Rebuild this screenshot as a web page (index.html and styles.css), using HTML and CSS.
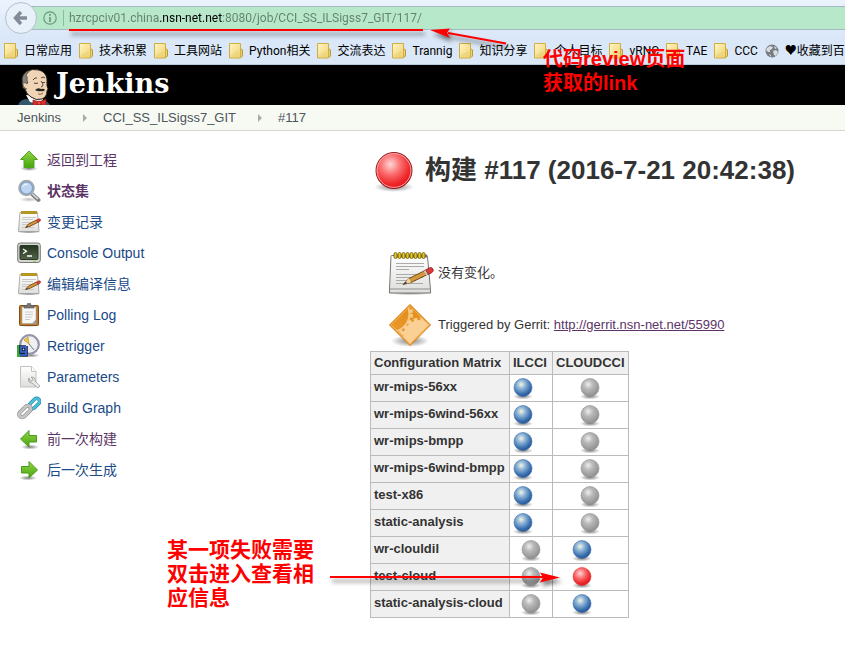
FILE: index.html
```html
<!DOCTYPE html>
<html lang="zh-CN">
<head>
<meta charset="utf-8">
<title>CCI_SS_ILSigss7_GIT #117 [Jenkins]</title>
<link rel="stylesheet" href="styles.css">
</head>
<body>
<svg class="defs" aria-hidden="true">
  <defs>
    <linearGradient id="folderFill" x2="1" y2="1"><stop stop-color="#fff6c8"/><stop offset="1" stop-color="#efd168"/></linearGradient>
    <linearGradient id="greenFill" x2="0" y2="1"><stop stop-color="#93d348"/><stop offset="1" stop-color="#48a70d"/></linearGradient>
    <linearGradient id="paperFill" x2="0" y2="1"><stop stop-color="#fff"/><stop offset="1" stop-color="#dededb"/></linearGradient>
    <linearGradient id="orangeFill" x2="0" y2="1"><stop stop-color="#e18c16"/><stop offset="1" stop-color="#eda038"/></linearGradient>
    <linearGradient id="screenFill" x2="0" y2="1"><stop stop-color="#23351f"/><stop offset="1" stop-color="#526348"/></linearGradient>
    <radialGradient id="blueFill" cx=".4" cy=".33" r=".65"><stop stop-color="#f4f6df"/><stop offset=".35" stop-color="#91b6d8"/><stop offset=".8" stop-color="#3b71b0"/><stop offset="1" stop-color="#2b599a"/></radialGradient>
    <radialGradient id="greyFill" cx=".4" cy=".33" r=".65"><stop stop-color="#eee"/><stop offset=".4" stop-color="#b9b9b9"/><stop offset="1" stop-color="#929292"/></radialGradient>
    <radialGradient id="redFill" cx=".4" cy=".33" r=".65"><stop stop-color="#ffd6d6"/><stop offset=".45" stop-color="#fa6a6c"/><stop offset=".85" stop-color="#ee2529"/><stop offset="1" stop-color="#e51b20"/></radialGradient>
    <radialGradient id="shadowFill"><stop stop-color="#000" stop-opacity=".5"/><stop offset="1" stop-color="#000" stop-opacity="0"/></radialGradient>
    <clipPath id="diamond"><path d="M24 4.500L43.500 24 24 43.500 4.500 24z"/></clipPath>
    <symbol id="folder" viewBox="0 0 14 16"><path d="M11 6h1.500l1 1v6l-1.500 1.500h-2z" fill="#ecd27a" stroke="#bd9a35"/><path d="M.5.5h11v14.500H.5z" fill="url(#folderFill)" stroke="#cfae45"/><path d="M1.500 12l8-4v6h-8z" fill="#ead07a" opacity=".6"/></symbol>
    <symbol id="ball-blue" viewBox="0 0 24 24"><ellipse cx="12" cy="20.500" rx="10" ry="3" fill="url(#shadowFill)"/><circle cx="12" cy="11.500" r="9" fill="url(#blueFill)" stroke="#386aa6" stroke-width=".6"/></symbol>
    <symbol id="ball-grey" viewBox="0 0 24 24"><ellipse cx="12" cy="20.500" rx="10" ry="3" fill="url(#shadowFill)"/><circle cx="12" cy="11.500" r="9" fill="url(#greyFill)" stroke="#8b8b8b" stroke-width=".6"/></symbol>
    <symbol id="ball-red" viewBox="0 0 24 24"><ellipse cx="12" cy="20.500" rx="10" ry="3" fill="url(#shadowFill)"/><circle cx="12" cy="11.500" r="9" fill="url(#redFill)" stroke="#d3383b" stroke-width=".6"/></symbol>
    <symbol id="notepad" viewBox="0 0 48 48">
      <ellipse cx="24" cy="43.500" rx="23" ry="3" fill="url(#shadowFill)"/>
      <path d="M5.500 6.500h35q1 0 1 1l3 33v3.500h-41v-4l1.500-32.500q0-1 .5-1z" fill="url(#paperFill)" stroke="#777"/>
      <path d="M4 40h40" stroke="#aaa" stroke-width="1.500"/>
      <path d="M10 14.500h28M10 17.500h28M10 20.500h13M10 25.500h29M10 28.500h27M10 31.500h20M10 34.500h27" stroke="#aaa"/>
      <path d="M8 7h33" stroke="#777" stroke-width="3"/>
      <g fill="#e0c52a" stroke="#6f5c00" stroke-width=".8"><rect x="8" y="3.500" width="3" height="6" rx="1.500"/><rect x="12" y="3.500" width="3" height="6" rx="1.500"/><rect x="16" y="3.500" width="3" height="6" rx="1.500"/><rect x="20" y="3.500" width="3" height="6" rx="1.500"/><rect x="24" y="3.500" width="3" height="6" rx="1.500"/><rect x="28" y="3.500" width="3" height="6" rx="1.500"/><rect x="32" y="3.500" width="3" height="6" rx="1.500"/><rect x="36" y="3.500" width="3" height="6" rx="1.500"/></g>
      <path d="M17 35.500l6-6 19-9.500 2.500 4L25 33.500z" fill="#d59a40" stroke="#704a12"/>
      <path d="M17 35.500l6-6 2 4z" fill="#f0d7a8"/><path d="M17 35.500l3-3 1 2z" fill="#333"/>
      <path d="M39.500 21.200l2.500 4.300 4-2q2-1.500 1-3.500t-3.500-1.200z" fill="#dc3b3b" stroke="#932020" stroke-width=".8"/><path d="M38.500 21.700l2.500 4.300" stroke="#c2c2c2" stroke-width="2"/>
    </symbol>
    <symbol id="notepad-small" viewBox="0 0 24 24">
      <ellipse cx="12" cy="22" rx="12" ry="1.500" fill="url(#shadowFill)"/>
      <path d="M3 2.500h17.500l1.500 18v1H1.500v-1z" fill="url(#paperFill)" stroke="#999" stroke-width=".8"/>
      <path d="M5 7.500h14M5 9.500h11M5 12.500h13M5 14.500h10M5 17.500h12" stroke="#c9c9c9"/>
      <path d="M4 2.500h16" stroke="#8d7816" stroke-width="3"/><path d="M4.500 2.500h16" stroke="#e0c335" stroke-width="2.500" stroke-dasharray="1 1"/>
      <path d="M8.500 17.500l3-3.500 8-4 1.500 2.300-8 4z" fill="#d4943a" stroke="#7b4e16" stroke-width=".9"/><path d="M8.500 17.500l1.500-1.800.8 1.200z" fill="#333"/>
      <path d="M19.500 10l1.500 2.300 2-1q1-.8.500-1.800t-2-.5z" fill="#dc3b3b" stroke="#a32a20" stroke-width=".6"/>
    </symbol>
    <symbol id="arrow-right" viewBox="0 0 24 24"><ellipse cx="11" cy="20" rx="9" ry="2.500" fill="url(#shadowFill)"/><path d="M4.500 8.500H12v-5l8.500 8.500-8.500 8v-5H4.500z" fill="url(#greenFill)" stroke="#4a9a1b"/></symbol>
  </defs>
</svg>

<header class="browser">
  <form class="address">
    <button class="back" type="button" aria-label="后退">
      <svg viewBox="0 0 16 16" width="16" height="16"><path d="M8 2L2.500 8 8 14M3 8h11" fill="none" stroke="#828c98" stroke-width="3.400"/></svg>
    </button>
    <svg class="info" viewBox="0 0 14 14"><circle cx="7" cy="7" r="6.200" fill="none" stroke="#73967f" stroke-width="1.200"/><path d="M7 6v5M7 3v1.800" stroke="#73967f" stroke-width="1.800"/></svg>
    <input class="url" type="text" aria-label="地址" value="hzrcpciv01.china.nsn-net.net:8080/job/CCI_SS_ILSigss7_GIT/117/">
  </form>
  <nav class="bookmarks">
    <a href="#"><svg><use href="#folder"/></svg>日常应用</a>
    <a href="#"><svg><use href="#folder"/></svg>技术积累</a>
    <a href="#"><svg><use href="#folder"/></svg>工具网站</a>
    <a href="#"><svg><use href="#folder"/></svg>Python相关</a>
    <a href="#"><svg><use href="#folder"/></svg>交流表达</a>
    <a href="#"><svg><use href="#folder"/></svg>Trannig</a>
    <a href="#"><svg><use href="#folder"/></svg>知识分享</a>
    <a href="#"><svg><use href="#folder"/></svg>个人目标</a>
    <a href="#"><svg><use href="#folder"/></svg>vRNC</a>
    <a href="#"><svg><use href="#folder"/></svg>TAE</a>
    <a href="#"><svg><use href="#folder"/></svg>CCC</a>
    <a href="#"><svg viewBox="0 0 14 14"><circle cx="7" cy="7" r="6.500" fill="#777c82"/><path d="M2 4l3-2 3 1-1 2-2 1v2L3 8 1 6zM8 7l3-1 2 2-2 4-2-1zM9 2l3 2-2 1zM4 10l2 1v2z" fill="#d8dde2"/></svg>♥收藏到百度</a>
  </nav>
</header>

<div class="brand">
  <a href="#" class="logo">
    <svg viewBox="0 0 34 38" aria-hidden="true">
      <path d="M0 38q1-6 8-7l8 2 8-1q7 1 8 6z" fill="#34566b"/>
      <path d="M8 27l4 7 9 2 4-4-1-4z" fill="#fff"/>
      <path d="M5 19Q2 9 8 4q6-4 13-2 7 2 8 9v7q2 3 0 5 0 6-5 8-6 2-11-2-5-3-6-8-3-1-2-2z" fill="#efd5b5" stroke="#211f1c"/>
      <path d="M6 18Q2 10 7 5q2-2 5-3-2 3-4 5 2 2 1 5l1 3-2 1z" fill="#85827d" stroke="#2b2926" stroke-width=".6"/>
      <path d="M8 15q-4-1-3 2 1 4 4 4" fill="#efd5b5" stroke="#5e493b" stroke-width=".8"/>
      <path d="M15 12q2-3 4-2M23 10q2-2 4 0M16 15q2 1 4 0M24 14.500h3M23 13q4 5 0 6" fill="none" stroke="#463629" stroke-width=".9"/>
      <path d="M17 22q3-3 6-1 3-1 4 1-2 2-4 1-3 1-6-1z" fill="#292420"/><path d="M20 26q3 1 5-1" fill="none" stroke="#8b5d46"/>
      <path d="M15 32l6 2 7-3v7l-7-2-6 2z" fill="#dc2c2c" stroke="#821818" stroke-width=".7"/><circle cx="21" cy="35" r="2" fill="#ef4840" stroke="#821818" stroke-width=".7"/>
    </svg>
    <span>Jenkins</span>
  </a>
</div>

<nav class="crumbs">
  <a href="#">Jenkins</a><i class="sep"></i><a href="#">CCI_SS_ILSigss7_GIT</a><i class="sep"></i><a href="#">#117</a>
</nav>

<div class="page">
  <nav class="tasks">
    <a href="#" class="visited"><svg viewBox="0 0 24 24"><ellipse cx="12" cy="20.500" rx="9" ry="2.500" fill="url(#shadowFill)"/><path d="M12 3l8.500 8.500H17v8H7v-8H3.500z" fill="url(#greenFill)" stroke="#4fa51d"/></svg>返回到工程</a>
    <a href="#" class="visited current"><svg viewBox="0 0 24 24"><ellipse cx="12" cy="20.500" rx="10" ry="2.500" fill="url(#shadowFill)" opacity=".5"/><path d="M15 15l6.500 6" stroke="#858585" stroke-width="4" stroke-linecap="round"/><path d="M15 14.500l6 5.500" stroke="#ddd" stroke-width="1.500"/><circle cx="9.500" cy="9" r="7" fill="#b9d3ee" stroke="#aaa" stroke-width="2.600"/><circle cx="9.500" cy="9" r="6" fill="#bcd6f2" stroke="#6f9cce"/><path d="M5 8q2-5 7-3-4 1-7 3z" fill="#edf5fd"/></svg>状态集</a>
    <a href="#"><svg><use href="#notepad-small"/></svg>变更记录</a>
    <a href="#"><svg viewBox="0 0 24 24"><rect x=".7" y="2" width="22.600" height="19.500" rx="2.500" fill="#d3d5cf" stroke="#777a75"/><rect x="3" y="4.500" width="18" height="14" rx="1" fill="url(#screenFill)" stroke="#2a3526"/><path d="M6 8l3.500 2.200L6 12.500M10 15h5" stroke="#fff" fill="none" stroke-width="1.300"/><path d="M16 20.300h3" stroke="#91c750"/></svg>Console Output</a>
    <a href="#"><svg><use href="#notepad-small"/></svg>编辑编译信息</a>
    <a href="#"><svg viewBox="0 0 24 24"><ellipse cx="12" cy="22" rx="11" ry="2" fill="url(#shadowFill)"/><rect x="2.500" y="2.500" width="19" height="20" rx="1" fill="#b97a30" stroke="#855016"/><path d="M5 4h14v16.500H5z" fill="#f7f7f5" stroke="#aaa" stroke-width=".6"/><path d="M8 9h8M8 11.500h8M8 14h7M8 16.500h5" stroke="#ccc"/><path d="M15 20.500l4-4v4z" fill="#999"/><path d="M7 5V2.500h3L10.500.5h3L14 2.500h3V5z" fill="#73756f" stroke="#555" stroke-width=".6"/></svg>Polling Log</a>
    <a href="#"><svg viewBox="0 0 24 24"><ellipse cx="14" cy="21.500" rx="9" ry="2" fill="url(#shadowFill)"/><circle cx="12.500" cy="10.500" r="9.300" fill="#f0f0f2" stroke="#9492ad" stroke-width="2.200"/><path d="M12 10L7 6l4-3z" fill="#f4cb38" stroke="#b5912d" stroke-width=".7"/><path d="M12 10l5 6" stroke="#777"/><path d="M0 11h3v12H0z" fill="#3ba934"/><path d="M9 13H4v5h5M9 12v9H3" fill="none" stroke="#15203b" stroke-width="3.600"/><path d="M9 13H4v5h5M9 12v9H3" fill="none" stroke="#3e6cdd" stroke-width="1.600"/></svg>Retrigger</a>
    <a href="#"><svg viewBox="0 0 24 24"><path d="M3.500 1.500h11l4.500 5v15.500H3.500z" fill="url(#paperFill)" stroke="#c2c2be"/><path d="M14.500 1.500v5H19" fill="#fff" stroke="#c2c2be"/><path d="M12 13q-2 5 3 5l6 5 2-2-5-5q1-4-4-4l2 2-1 2-2 0z" fill="#e8e8e5" stroke="#999" stroke-width=".8"/></svg>Parameters</a>
    <a href="#"><svg viewBox="0 0 24 24" fill="none"><rect x="11.500" y="4.500" width="12" height="6" rx="3" transform="rotate(-45 17.500 7.500)" stroke="#2187a5" stroke-width="3.600"/><rect x="11.500" y="4.500" width="12" height="6" rx="3" transform="rotate(-45 17.500 7.500)" stroke="#4fc0dd" stroke-width="2.400"/><rect x="1" y="12.500" width="14" height="6" rx="3" transform="rotate(-45 8 15.500)" stroke="#8a8a8a" stroke-width="4"/><rect x="1" y="12.500" width="14" height="6" rx="3" transform="rotate(-45 8 15.500)" stroke="#c5c5c5" stroke-width="2.800"/></svg>Build Graph</a>
    <a href="#" class="visited"><svg viewBox="0 0 24 24"><g transform="matrix(-1 0 0 1 24 0)"><use href="#arrow-right"/></g></svg>前一次构建</a>
    <a href="#"><svg><use href="#arrow-right"/></svg>后一次生成</a>
  </nav>

  <main>
    <h1>
      <svg viewBox="0 0 48 48" aria-hidden="true"><ellipse cx="24" cy="41" rx="20" ry="5" fill="url(#shadowFill)"/><circle cx="24" cy="24.500" r="18" fill="url(#redFill)" stroke="#8a1a1d"/><circle cx="24" cy="24.500" r="16.900" fill="none" stroke="#f9a0a0"/></svg>
      构建 #117 (2016-7-21 20:42:38)
    </h1>
    <section class="summary">
      <p><svg aria-hidden="true"><use href="#notepad"/></svg><span>没有变化。</span></p>
      <p><svg viewBox="0 0 48 48" aria-hidden="true"><ellipse cx="24" cy="40" rx="19" ry="6" fill="url(#shadowFill)"/><path d="M24 3.500L44.500 24 24 44.500 3.500 24z" fill="url(#orangeFill)" stroke="#df7a08"/><g clip-path="url(#diamond)"><circle cx="6" cy="13" r="17.500" fill="none" stroke="#f8c985" stroke-width="2"/><circle cx="6" cy="13" r="19.500" fill="none" stroke="#f8c985" stroke-width="3" stroke-dasharray="3.500 3"/><circle cx="34" cy="36" r="17" fill="#fad094"/><circle cx="34" cy="36" r="18" fill="none" stroke="#fad094" stroke-width="3" stroke-dasharray="3.500 3"/></g><path d="M24 5.200L42.800 24 24 42.800 5.200 24z" fill="none" stroke="#f3b35c"/></svg><span>Triggered by Gerrit: <a href="#">http://gerrit.nsn-net.net/55990</a></span></p>
    </section>
    <table class="matrix">
      <colgroup><col class="col-name"><col class="col-il"><col class="col-cloud"></colgroup>
      <thead><tr><th scope="col">Configuration Matrix</th><th scope="col">ILCCI</th><th scope="col">CLOUDCCI</th></tr></thead>
      <tbody>
        <tr><th scope="row">wr-mips-56xx</th><td><a href="#" aria-label="成功"><svg><use href="#ball-blue"/></svg></a></td><td><svg><use href="#ball-grey"/></svg></td></tr>
        <tr><th scope="row">wr-mips-6wind-56xx</th><td><a href="#" aria-label="成功"><svg><use href="#ball-blue"/></svg></a></td><td><svg><use href="#ball-grey"/></svg></td></tr>
        <tr><th scope="row">wr-mips-bmpp</th><td><a href="#" aria-label="成功"><svg><use href="#ball-blue"/></svg></a></td><td><svg><use href="#ball-grey"/></svg></td></tr>
        <tr><th scope="row">wr-mips-6wind-bmpp</th><td><a href="#" aria-label="成功"><svg><use href="#ball-blue"/></svg></a></td><td><svg><use href="#ball-grey"/></svg></td></tr>
        <tr><th scope="row">test-x86</th><td><a href="#" aria-label="成功"><svg><use href="#ball-blue"/></svg></a></td><td><svg><use href="#ball-grey"/></svg></td></tr>
        <tr><th scope="row">static-analysis</th><td><a href="#" aria-label="成功"><svg><use href="#ball-blue"/></svg></a></td><td><svg><use href="#ball-grey"/></svg></td></tr>
        <tr><th scope="row">wr-clouldil</th><td><svg><use href="#ball-grey"/></svg></td><td><a href="#" aria-label="成功"><svg><use href="#ball-blue"/></svg></a></td></tr>
        <tr><th scope="row">test-cloud</th><td><svg><use href="#ball-grey"/></svg></td><td><a href="#" aria-label="失败"><svg><use href="#ball-red"/></svg></a></td></tr>
        <tr><th scope="row">static-analysis-cloud</th><td><svg><use href="#ball-grey"/></svg></td><td><a href="#" aria-label="成功"><svg><use href="#ball-blue"/></svg></a></td></tr>
      </tbody>
    </table>
  </main>
</div>

<svg class="mark mark-link" viewBox="0 0 450 30" aria-hidden="true"><path d="M1 10h354" stroke="#f00" stroke-width="2"/><path d="M438 23.500L380 13" stroke="#f00" stroke-width="2"/><path d="M362 10l20-1.500-3 4.500 3 5z" fill="#f00"/></svg>
<p class="note note-link">代码review页面<br>获取的link</p>
<svg class="mark mark-fail" viewBox="0 0 240 30" aria-hidden="true"><path d="M0 9h215" stroke="#f00" stroke-width="2"/><path d="M230 9.500l-20-5 3 5-3 5z" fill="#f00"/></svg>
<p class="note note-fail">某一项失败需要<br>双击进入查看相<br>应信息</p>
</body>
</html>
```
FILE: styles.css
```css
* { box-sizing: border-box; }

body {
  position: relative;
  margin: 0;
  min-height: 100vh;
  overflow-x: hidden;
  background: #fff;
  color: #333;
  font: 13px/16px "Liberation Sans", "Noto Sans CJK SC", sans-serif;
}

.defs { position: absolute; width: 0; height: 0; }
svg { flex: none; }
a { color: #204a87; text-decoration: none; }

/* Browser chrome */
.browser {
  height: 65px;
  overflow: hidden;
  background: linear-gradient(#ebf3fd, #dae7f8 60%, #dae8f8);
  border-bottom: 1px solid #b9c9dc;
  font: 12px/18px Roboto, "Noto Sans CJK SC", sans-serif;
}

.address {
  display: flex;
  align-items: center;
  height: 24px;
  margin: 6px 0 0 20px;
  background: #b7e8ca;
  border: solid #a5b8c4;
  border-width: 1px 0;
}

.back {
  display: flex;
  flex: none;
  align-items: center;
  justify-content: center;
  width: 32px;
  height: 32px;
  margin-left: -15px;
  padding: 0;
  border: 1px solid #b4c1d2;
  border-radius: 50%;
  background: #e8f0fa;
}

.info { width: 14px; height: 14px; margin: 0 6px; }

.url {
  flex: 1;
  min-width: 0;
  height: 16px;
  padding: 0 0 0 5px;
  border: 0;
  border-left: 1px solid #8fb9a0;
  outline: 0;
  color: #63806d;
  font: inherit;
  background: linear-gradient(90deg, #63806d 96px, #000 96px, #000 158px, #63806d 158px);
  -webkit-background-clip: text;
  background-clip: text;
  -webkit-text-fill-color: transparent;
}

.bookmarks {
  display: flex;
  gap: 7px;
  padding: 12px 4px 0;
  white-space: nowrap;
}
.bookmarks a { display: flex; flex: none; gap: 6px; align-items: center; color: #000; }
.bookmarks svg { width: 14px; height: 16px; }

/* Jenkins header */
.brand { height: 40px; overflow: hidden; padding-left: 18px; background: #000; }
.logo { display: inline-flex; color: #fff; font: bold 27px/38px "DejaVu Serif", serif; }
.logo svg { width: 34px; height: 38px; margin: 3px 4px 0 0; }

.crumbs {
  display: flex;
  align-items: center;
  height: 26px;
  padding: 0 17px;
  background: #f6faf2;
  border-bottom: 1px solid #d3d7cf;
}
.crumbs a { color: #4d545d; }
.sep {
  width: 4px;
  margin: 0 16px 0 22px;
  border: solid transparent;
  border-width: 4px 0 4px 4px;
  border-left-color: #aaa;
}

/* Page body */
.page { display: flex; padding-top: 15px; }
.tasks { flex: none; width: 370px; padding: 0 17px; font-size: 14px; }
.tasks a { display: flex; align-items: center; gap: 6px; height: 31px; padding-bottom: 4px; }
.tasks svg { width: 24px; height: 24px; }
.tasks .visited { color: #5c3566; }
.tasks .current { font-weight: bold; }

main { flex: 1; min-width: 0; }
h1 { display: flex; align-items: center; gap: 7px; margin: 0; font-size: 26px; line-height: 48px; }
h1 svg { width: 48px; height: 48px; }

.summary { padding: 53px 0 0 16px; }
.summary p { display: flex; align-items: center; gap: 4px; height: 52px; margin: 0; }
.summary svg { width: 48px; height: 48px; }
.summary a { color: #5c3566; text-decoration: underline; }

.matrix { border-collapse: collapse; }
.matrix .col-name { width: 139px; }
.matrix .col-il { width: 43px; }
.matrix .col-cloud { width: 74px; }
.matrix th, .matrix td { border: 1px solid #bbb; }
.matrix th { padding: 3px; background: #f0f0f0; text-align: left; }
.matrix td { padding: 1px 0; text-align: center; line-height: 0; }
.matrix tbody tr { height: 27px; }
.matrix tbody th { padding: 3px 3px 6px; }
.matrix svg { width: 24px; height: 24px; }
.matrix a { margin-right: 16px; }

/* Red annotations laid over the page */
.mark { position: absolute; filter: drop-shadow(2px 4px 2px rgb(0 0 0 / 50%)); }
.mark-link { left: 68px; top: 20px; width: 450px; height: 30px; }
.mark-fail { left: 330px; top: 568px; width: 240px; height: 30px; }
.note {
  position: absolute;
  margin: 0;
  color: #f00;
  font-size: 20px;
  font-weight: bold;
  line-height: 24px;
  white-space: nowrap;
}
.note-link { left: 543px; top: 47px; }
.note-fail { left: 167px; top: 538px; font-size: 21px; }
```
